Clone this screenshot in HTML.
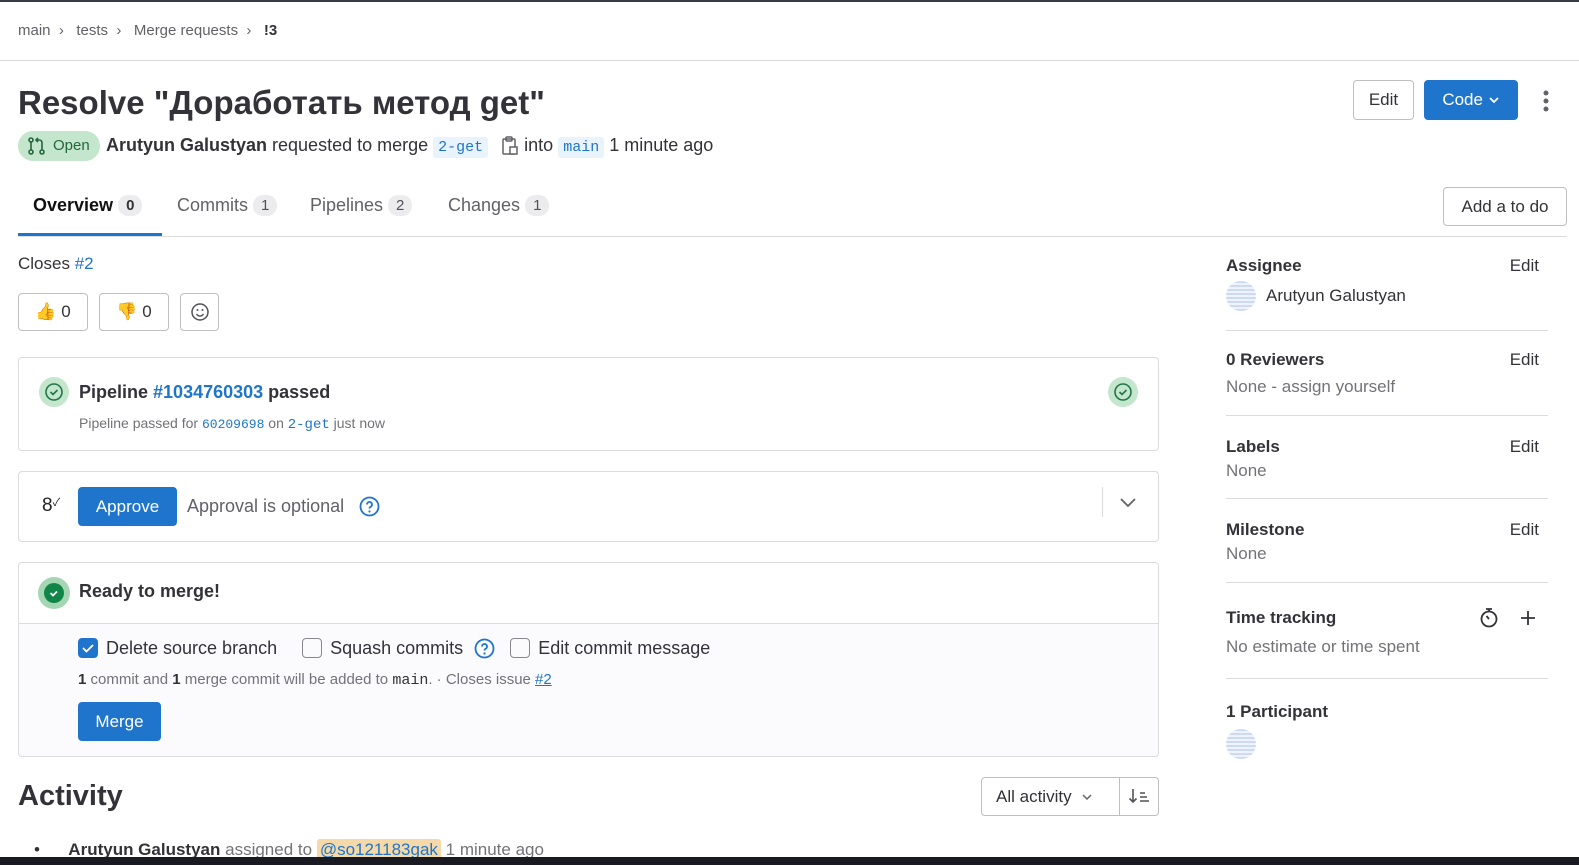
<!DOCTYPE html>
<html><head><meta charset="utf-8"><style>
*{box-sizing:border-box;margin:0;padding:0}
body{width:1579px;height:865px;overflow:hidden;background:#fff;font-family:"Liberation Sans","Noto Sans CJK SC",sans-serif;color:#333238;position:relative}
.a{position:absolute;white-space:nowrap}
.mono{font-family:"Liberation Mono",monospace}
.btn{position:absolute;border:1px solid #bfbfc3;border-radius:4px;background:#fff;display:flex;align-items:center;justify-content:center;font-size:17px;color:#333238}
.blue{background:#1f75cb;border-color:#1f75cb;color:#fff}
.box{position:absolute;border:1px solid #dcdcde;border-radius:4px;background:#fff}
.cnt{display:inline-block;background:#ececef;border-radius:10px;font-size:15px;padding:2px 8px;margin-left:5px;color:#535158;vertical-align:1px;font-weight:normal}
.sb{position:absolute;left:1226px;width:322px}
.h{font-weight:bold;font-size:17px;color:#333238}
.e{position:absolute;right:9px;font-size:17px}
.g{color:#737278;font-size:17px}
.hr{position:absolute;left:1226px;width:322px;height:1px;background:#dcdcde}
.lnk{color:#1f75cb}
.cb{display:inline-block;width:20px;height:20px;border:1px solid #89888d;border-radius:4px;vertical-align:-4px;margin-right:8px}
.av{position:absolute;width:30px;height:30px;border-radius:50%;background:repeating-linear-gradient(0deg,#c9d7f5 0 2px,#eef2fc 2px 4px),#dde6fa;opacity:.9}
</style></head><body>
<div class="a" style="left:0;top:0;width:1579px;height:2px;background:#3a3a48"></div>
<div class="a" style="left:18px;top:22px;font-size:15px;color:#626168">main &nbsp;›&nbsp;&nbsp; tests &nbsp;›&nbsp;&nbsp; Merge requests &nbsp;›&nbsp;&nbsp; <b style="color:#333238">!3</b></div>
<div class="a" style="left:0;top:60px;width:1579px;height:1px;background:#dcdcde"></div>

<div class="a" style="left:18px;top:84px;font-size:33px;font-weight:bold;color:#333238">Resolve "Доработать метод get"</div>
<div class="btn" style="left:1353px;top:80px;width:61px;height:40px">Edit</div>
<div class="btn blue" style="left:1424px;top:80px;width:94px;height:40px">Code&nbsp;<svg width="12" height="8" viewBox="0 0 12 8"><path d="M2 2l4 4 4-4" stroke="#fff" stroke-width="1.8" fill="none"/></svg></div>
<svg class="a" style="left:1542px;top:89px" width="8" height="24"><circle cx="4" cy="4" r="2.5" fill="#626168"/><circle cx="4" cy="12" r="2.5" fill="#626168"/><circle cx="4" cy="20" r="2.5" fill="#626168"/></svg>

<div class="a" style="left:18px;top:131px;width:82px;height:30px;border-radius:15px;background:#c3e6cd"></div>
<svg class="a" style="left:27px;top:137px" width="20" height="18" viewBox="0 0 20 18"><g stroke="#24663b" stroke-width="1.6" fill="none"><circle cx="4" cy="3" r="2"/><circle cx="4" cy="15" r="2"/><circle cx="15" cy="15" r="2"/><path d="M4 5v8M15 13V6c0-2-1-3-3-3H9M11 1L9 3l2 2"/></g></svg>
<div class="a" style="left:53px;top:137px;font-size:15px;color:#24663b">Open</div>
<div class="a" style="left:106px;top:135px;font-size:18px"><b>Arutyun Galustyan</b> requested to merge <span class="mono lnk" style="background:#e9f3fc;font-size:15px;padding:2px 5px;border-radius:3px">2-get</span> <span style="display:inline-block;width:26px"></span> into <span class="mono lnk" style="background:#e9f3fc;font-size:15px;padding:2px 5px;border-radius:3px">main</span> 1 minute ago</div>
<svg class="a" style="left:501px;top:136px" width="18" height="20" viewBox="0 0 18 20"><g stroke="#626168" stroke-width="1.5" fill="none"><rect x="2" y="3" width="12" height="15" rx="1"/><rect x="5" y="1" width="6" height="4" rx="1"/><rect x="9" y="11" width="7" height="7" fill="#fff"/></g></svg>

<div class="a" style="left:33px;top:195px;font-size:18px;font-weight:bold;color:#111">Overview<span class="cnt" style="font-weight:bold;color:#333">0</span></div>
<div class="a" style="left:177px;top:195px;font-size:18px;color:#626168">Commits<span class="cnt">1</span></div>
<div class="a" style="left:310px;top:195px;font-size:18px;color:#626168">Pipelines<span class="cnt">2</span></div>
<div class="a" style="left:448px;top:195px;font-size:18px;color:#626168">Changes<span class="cnt">1</span></div>
<div class="btn" style="left:1443px;top:187px;width:124px;height:39px">Add a to do</div>
<div class="a" style="left:18px;top:236px;width:1549px;height:1px;background:#dcdcde"></div>
<div class="a" style="left:18px;top:233px;width:144px;height:3px;background:#1f75cb"></div>

<div class="a" style="left:18px;top:254px;font-size:17px">Closes <span class="lnk">#2</span></div>
<div class="btn" style="left:18px;top:293px;width:70px;height:38px">👍&nbsp;0</div>
<div class="btn" style="left:99px;top:293px;width:70px;height:38px">👎&nbsp;0</div>
<div class="btn" style="left:180px;top:293px;width:39px;height:38px"><svg width="20" height="20" viewBox="0 0 20 20"><g stroke="#535158" stroke-width="1.5" fill="none"><circle cx="10" cy="10" r="8"/><path d="M6.5 12c1 1.5 2 2 3.5 2s2.5-.5 3.5-2"/></g><circle cx="7.5" cy="8" r="1" fill="#535158"/><circle cx="12.5" cy="8" r="1" fill="#535158"/></svg></div>

<div class="box" style="left:18px;top:357px;width:1141px;height:94px"></div>
<svg class="a" style="left:39px;top:377px" width="30" height="30"><circle cx="15" cy="15" r="15" fill="#c3e6cd"/><circle cx="15" cy="15" r="8" stroke="#217645" stroke-width="1.6" fill="none"/><path d="M11.5 15l2.5 2.5 4.5-4.5" stroke="#217645" stroke-width="1.6" fill="none"/></svg>
<svg class="a" style="left:1108px;top:377px" width="30" height="30"><circle cx="15" cy="15" r="15" fill="#c3e6cd"/><circle cx="15" cy="15" r="8" stroke="#217645" stroke-width="1.6" fill="none"/><path d="M11.5 15l2.5 2.5 4.5-4.5" stroke="#217645" stroke-width="1.6" fill="none"/></svg>
<div class="a" style="left:79px;top:382px;font-size:18px;font-weight:bold">Pipeline <span class="lnk">#1034760303</span> passed</div>
<div class="a" style="left:79px;top:415px;font-size:14px;color:#737278">Pipeline passed for <span class="mono lnk" style="font-size:13px">60209698</span> on <span class="mono lnk">2-get</span> just now</div>

<div class="box" style="left:18px;top:471px;width:1141px;height:71px"></div>
<div class="a" style="left:42px;top:494px;font-size:19px;color:#222">8<span style="font-size:11px;vertical-align:5px">✓</span></div>
<div class="btn blue" style="left:78px;top:487px;width:99px;height:39px">Approve</div>
<div class="a" style="left:187px;top:496px;font-size:18px;color:#626168">Approval is optional</div>
<svg class="a" style="left:359px;top:496px" width="21" height="21"><circle cx="10.5" cy="10.5" r="9" stroke="#1f75cb" stroke-width="1.8" fill="none"/><path d="M8 8.5a2.5 2.5 0 1 1 3.5 2.3c-.7.4-1 .8-1 1.7" stroke="#1f75cb" stroke-width="1.8" fill="none"/><circle cx="10.5" cy="15.5" r="1.1" fill="#1f75cb"/></svg>
<div class="a" style="left:1102px;top:487px;width:1px;height:30px;background:#dcdcde"></div>
<svg class="a" style="left:1119px;top:496px" width="18" height="12"><path d="M2 3l7 7 7-7" stroke="#626168" stroke-width="1.8" fill="none"/></svg>

<div class="box" style="left:18px;top:562px;width:1141px;height:195px;background:#fbfafd;overflow:hidden"><div style="height:61px;background:#fff;border-bottom:1px solid #dcdcde"></div></div>
<svg class="a" style="left:38px;top:577px" width="32" height="32"><circle cx="16" cy="16" r="16" fill="#a5d6b4"/><circle cx="16" cy="16" r="10" fill="#108548"/><path d="M12.5 16l2.5 2.5 4-4" stroke="#fff" stroke-width="1.8" fill="none"/></svg>
<div class="a" style="left:79px;top:581px;font-size:18px;font-weight:bold">Ready to merge!</div>
<div class="a" style="left:78px;top:638px;font-size:18px;color:#333238"><span class="cb" style="background:#1f75cb;border-color:#1f75cb;position:relative"><svg style="position:absolute;left:2px;top:2px" width="14" height="14"><path d="M2 7l3.5 3.5L12 4" stroke="#fff" stroke-width="1.8" fill="none"/></svg></span>Delete source branch&nbsp;&nbsp;&nbsp;&nbsp; <span class="cb"></span>Squash commits <span style="display:inline-block;width:22px"></span>&nbsp;&nbsp;&nbsp; <span class="cb"></span>Edit commit message</div>
<svg class="a" style="left:474px;top:638px" width="21" height="21"><circle cx="10.5" cy="10.5" r="9" stroke="#1f75cb" stroke-width="1.8" fill="none"/><path d="M8 8.5a2.5 2.5 0 1 1 3.5 2.3c-.7.4-1 .8-1 1.7" stroke="#1f75cb" stroke-width="1.8" fill="none"/><circle cx="10.5" cy="15.5" r="1.1" fill="#1f75cb"/></svg>
<div class="a" style="left:78px;top:671px;font-size:15px;color:#737278"><b style="color:#333">1</b> commit and <b style="color:#333">1</b> merge commit will be added to <span class="mono" style="color:#333">main</span>. · Closes issue <span class="lnk" style="text-decoration:underline">#2</span></div>
<div class="btn blue" style="left:78px;top:702px;width:83px;height:39px">Merge</div>

<div class="a" style="left:18px;top:780px;font-size:29px;font-weight:bold">Activity</div>
<div class="btn" style="left:981px;top:777px;width:178px;height:39px;justify-content:flex-start;padding-left:14px">All activity&nbsp;&nbsp;<svg width="12" height="8"><path d="M2 2l4 4 4-4" stroke="#626168" stroke-width="1.5" fill="none"/></svg></div>
<div class="a" style="left:1119px;top:777px;width:1px;height:39px;background:#bfbfc3"></div>
<svg class="a" style="left:1128px;top:787px" width="22" height="18"><g stroke="#535158" stroke-width="1.6" fill="none"><path d="M5 2v13M1.5 11.5L5 15l3.5-3.5M12 6h5M12 10h7M12 14h9"/></g></svg>
<div class="a" style="left:34px;top:840px;font-size:17px"><span style="color:#333">•</span>&nbsp;&nbsp;&nbsp;&nbsp;&nbsp; <b>Arutyun Galustyan</b> <span style="color:#737278">assigned to</span> <span class="lnk" style="background:#f5d9a8;padding:1px 3px;border-radius:3px">@so121183gak</span> <span style="color:#737278">1 minute ago</span></div>
<div class="a" style="left:0;top:857px;width:1579px;height:8px;background:#1a1a22"></div>

<div class="sb" style="top:256px"><span class="h">Assignee</span><span class="e" style="top:0">Edit</span></div>
<div class="av" style="left:1226px;top:281px"></div>
<div class="a" style="left:1266px;top:286px;font-size:17px">Arutyun Galustyan</div>
<div class="hr" style="top:330px"></div>
<div class="sb" style="top:350px"><span class="h">0 Reviewers</span><span class="e" style="top:0">Edit</span></div>
<div class="a g" style="left:1226px;top:377px">None - assign yourself</div>
<div class="hr" style="top:415px"></div>
<div class="sb" style="top:437px"><span class="h">Labels</span><span class="e" style="top:0">Edit</span></div>
<div class="a g" style="left:1226px;top:461px">None</div>
<div class="hr" style="top:498px"></div>
<div class="sb" style="top:520px"><span class="h">Milestone</span><span class="e" style="top:0">Edit</span></div>
<div class="a g" style="left:1226px;top:544px">None</div>
<div class="hr" style="top:582px"></div>
<div class="sb" style="top:608px"><span class="h">Time tracking</span></div>
<svg class="a" style="left:1479px;top:607px" width="20" height="22"><g stroke="#333238" stroke-width="1.8" fill="none"><circle cx="10" cy="12" r="7.5"/><path d="M7 2h6M10 2v2M10 12L7.5 9"/></g></svg>
<svg class="a" style="left:1519px;top:609px" width="18" height="18"><path d="M9 2v14M2 9h14" stroke="#333238" stroke-width="1.8"/></svg>
<div class="a g" style="left:1226px;top:637px">No estimate or time spent</div>
<div class="hr" style="top:678px"></div>
<div class="sb" style="top:702px"><span class="h">1 Participant</span></div>
<div class="av" style="left:1226px;top:729px"></div>
</body></html>
